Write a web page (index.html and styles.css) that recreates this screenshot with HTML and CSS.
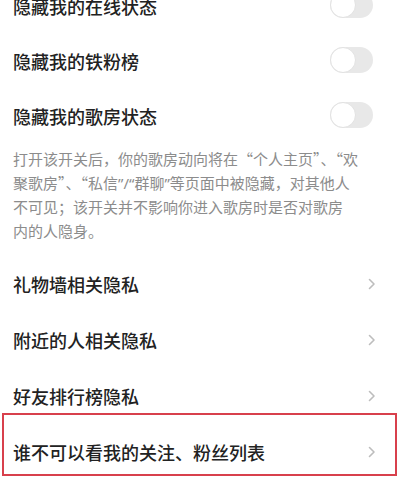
FILE: index.html
```html
<!DOCTYPE html>
<html lang="zh-CN">
<head>
<meta charset="utf-8">
<link rel="stylesheet" href="styles.css">
</head>
<body>
<div class="page">
  <div class="row">
    <span class="label">隐藏我的在线状态</span>
    <span class="toggle"><span class="knob"></span></span>
  </div>
  <div class="row">
    <span class="label">隐藏我的铁粉榜</span>
    <span class="toggle"><span class="knob"></span></span>
  </div>
  <div class="row">
    <span class="label">隐藏我的歌房状态</span>
    <span class="toggle"><span class="knob"></span></span>
  </div>
  <p class="desc">打开该开关后，你的歌房动向将在“个人主页”、“欢<br>聚歌房”、“私信<span class="tight">”/“</span>群聊<span class="tight">”</span>等页面中被隐藏，对其他人<br>不可见；该开关并不影响你进入歌房时是否对歌房<br>内的人隐身。</p>
  <div class="row link">
    <span class="label">礼物墙相关隐私</span>
    <svg class="chev" width="8" height="12" viewBox="0 0 8 12"><polyline points="1.5,1.5 6,6 1.5,10.5" fill="none" stroke="#bdbdbd" stroke-width="1.6" stroke-linecap="round" stroke-linejoin="round"/></svg>
  </div>
  <div class="row link">
    <span class="label">附近的人相关隐私</span>
    <svg class="chev" width="8" height="12" viewBox="0 0 8 12"><polyline points="1.5,1.5 6,6 1.5,10.5" fill="none" stroke="#bdbdbd" stroke-width="1.6" stroke-linecap="round" stroke-linejoin="round"/></svg>
  </div>
  <div class="row link">
    <span class="label">好友排行榜隐私</span>
    <svg class="chev" width="8" height="12" viewBox="0 0 8 12"><polyline points="1.5,1.5 6,6 1.5,10.5" fill="none" stroke="#bdbdbd" stroke-width="1.6" stroke-linecap="round" stroke-linejoin="round"/></svg>
  </div>
  <div class="row link marked">
    <span class="label">谁不可以看我的关注、粉丝列表</span>
    <svg class="chev" width="8" height="12" viewBox="0 0 8 12"><polyline points="1.5,1.5 6,6 1.5,10.5" fill="none" stroke="#bdbdbd" stroke-width="1.6" stroke-linecap="round" stroke-linejoin="round"/></svg>
    <span class="highlight"></span>
  </div>
</div>
</body>
</html>
```
FILE: styles.css
```css
html, body {
  margin: 0;
  padding: 0;
  background: #ffffff;
}
body {
  font-family: "Noto Sans CJK SC", "Noto Sans", sans-serif;
  overflow: hidden;
}
.page {
  margin-top: -22px;
}
.row {
  height: 55px;
  display: flex;
  align-items: center;
  justify-content: space-between;
  padding: 0 27px 0 13px;
  position: relative;
}
.link {
  height: 56px;
  padding-right: 24px;
}
.label {
  font-size: 18px;
  color: #222222;
  font-weight: 500;
  letter-spacing: 0;
}
.toggle {
  width: 43px;
  height: 26px;
  border-radius: 13px;
  background: #e8e8e8;
  position: relative;
  margin-top: -2px;
}
.knob {
  position: absolute;
  left: 0;
  top: 0;
  width: 24px;
  height: 24px;
  border-radius: 50%;
  background: #ffffff;
  border: 1px solid #e2e2e2;
}
.desc {
  margin: 0;
  padding: 4px 20px 13px 13px;
  font-size: 15px;
  line-height: 24px;
  color: #8c8c8c;
  white-space: nowrap;
}
.tight {
  font-family: "Noto Sans", sans-serif;
}
.chev {
  display: block;
}
.highlight {
  position: absolute;
  left: 2px;
  right: 3px;
  top: -11px;
  bottom: 4px;
  border: 2px solid #d8404c;
  pointer-events: none;
}
```
